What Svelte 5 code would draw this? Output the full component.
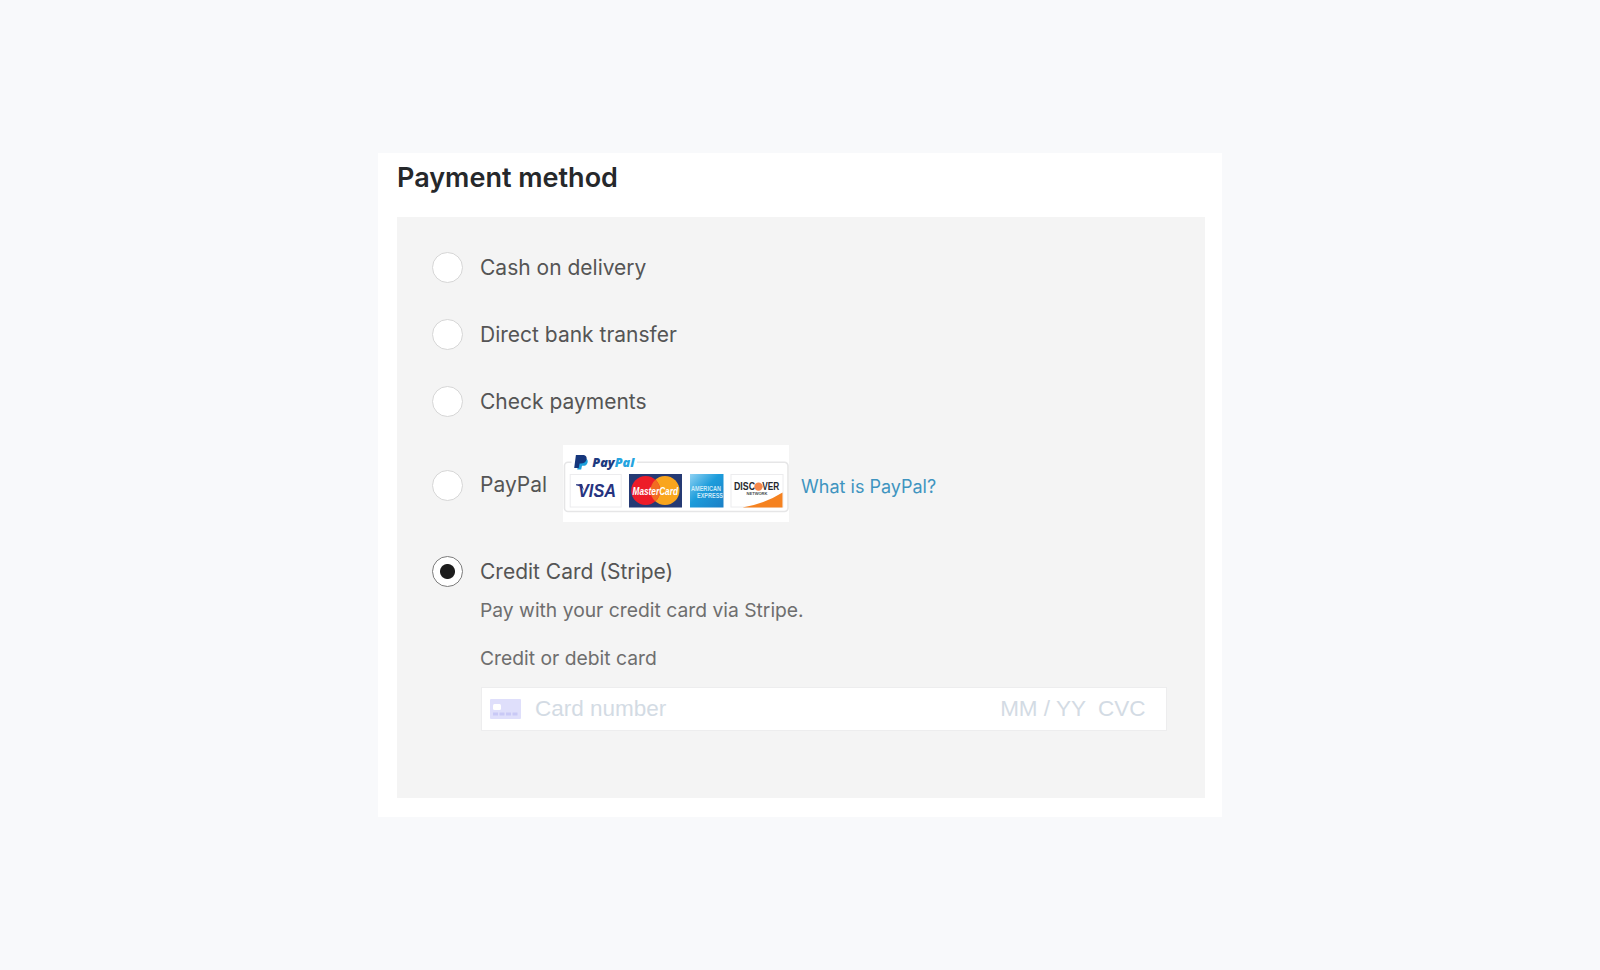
<script>
    let selected = $state('stripe');

    const methods = [
        { id: 'cod', label: 'Cash on delivery' },
        { id: 'bacs', label: 'Direct bank transfer' },
        { id: 'cheque', label: 'Check payments' },
        { id: 'paypal', label: 'PayPal' },
        { id: 'stripe', label: 'Credit Card (Stripe)' }
    ];
</script>

<main>
    <section class="checkout">
        <h1>Payment method</h1>
        <div class="panel">
            {#each methods as method (method.id)}
                <div class="method {method.id}">
                    <input type="radio" id={method.id} name="payment" value={method.id} bind:group={selected} />
                    <label for={method.id}>{method.label}</label>
                    {#if method.id === 'paypal'}
                        <svg class="brands" viewBox="0 0 226 77" width="226" height="77">
                            <rect width="226" height="77" fill="#fff" />
                            <path d="M8.5 17.3H5a3.5 3.5 0 0 0-3.5 3.5V63A3.5 3.5 0 0 0 5 66.5H221.500a3.5 3.5 0 0 0 3.5-3.5V20.8a3.5 3.5 0 0 0-3.5-3.5H74" fill="none" stroke="#e6e6e7" stroke-width="1.6" />

                            <!-- PayPal -->
                            <path d="M16.6 13.4h5.2c2.4 0 3.4 1.7 2.8 4-.6 2.5-2.3 3.4-4.6 3.4h-1l-.8 3.7h-4z" fill="#1da0dc" />
                            <path d="M12.9 10h6.6c3.200 0 4.700 1.800 4 4.600-.6 2.800-2.600 4-5.600 4h-1.300l-.9 4.400h-4.500z" fill="#16367c" />
                            <text x="29.3" y="22.3" textLength="42" lengthAdjust="spacingAndGlyphs" class="logo" font-size="11.5"><tspan fill="#1d3a80">Pay</tspan><tspan fill="#25a4df">Pal</tspan></text>

                            <!-- Visa -->
                            <rect x="7.2" y="29.5" width="51" height="32.5" fill="#fff" stroke="#ececee" />
                            <text x="15" y="52.2" textLength="38" lengthAdjust="spacingAndGlyphs" class="visa" font-size="18" fill="#26337f">VISA</text>
                            <path d="M13 39.200h6l2 6c-1.500-2.600-4-4.200-8-5z" fill="#26337f" />

                            <!-- MasterCard -->
                            <rect x="66" y="29" width="53" height="33.5" fill="#253a74" />
                            <circle cx="102" cy="45.6" r="14.5" fill="#f9a51d" />
                            <circle cx="82.7" cy="45.6" r="14.5" fill="#ed1c28" />
                            <path d="M92.3 34.8a14.5 14.5 0 0 1 0 21.6a14.5 14.5 0 0 1 0-21.6z" fill="#f26c22" />
                            <text x="69.5" y="49.5" textLength="45.500" lengthAdjust="spacingAndGlyphs" class="visa" font-size="10" fill="#fff">MasterCard</text>

                            <!-- American Express -->
                            <defs>
                                <linearGradient id="amex" x1="0" y1="0" x2="1" y2="1">
                                    <stop offset="0" stop-color="#8fd2f3" />
                                    <stop offset=".45" stop-color="#1c9cdb" />
                                    <stop offset="1" stop-color="#1b7fc6" />
                                </linearGradient>
                            </defs>
                            <rect x="127" y="29" width="33.5" height="33.5" fill="url(#amex)" />
                            <text x="128" y="46.3" textLength="30" lengthAdjust="spacingAndGlyphs" class="plain" font-size="7" fill="#c9e9f8">AMERICAN</text>
                            <text x="134" y="52.6" textLength="26" lengthAdjust="spacingAndGlyphs" class="plain" font-size="7" fill="#c9e9f8">EXPRESS</text>

                            <!-- Discover -->
                            <rect x="168" y="29.5" width="52" height="32.5" fill="#fff" stroke="#ececee" />
                            <path d="M179.5 62.5q22-3.5 40-15v15z" fill="#f58220" />
                            <text x="171" y="45.3" textLength="21" lengthAdjust="spacingAndGlyphs" class="plain" font-size="10.5" fill="#25282d">DISC</text>
                            <circle cx="195.5" cy="41.6" r="4.2" fill="#f5874a" />
                            <text x="199.2" y="45.3" textLength="17" lengthAdjust="spacingAndGlyphs" class="plain" font-size="10.5" fill="#25282d">VER</text>
                            <text x="183.5" y="50.3" textLength="21" lengthAdjust="spacingAndGlyphs" class="plain" font-size="4" fill="#4a4c50">NETWORK</text>
                        </svg>
                        <a href="#what-is-paypal">What is PayPal?</a>
                    {/if}
                </div>
            {/each}

            {#if selected === 'stripe'}
                <div class="details">
                    <p class="hint">Pay with your credit card via Stripe.</p>
                    <p class="field-label">Credit or debit card</p>
                    <div class="card-field">
                        <svg viewBox="0 0 31 20" width="31" height="20">
                            <rect width="31" height="20" rx="1" fill="#dfdffb" />
                            <rect x="3" y="5" width="8" height="6" rx="1.5" fill="#fff" />
                            <path d="M3 15h26" stroke="#c9c9f6" stroke-width="3" stroke-dasharray="5 1.5" />
                        </svg>
                        <span class="number">Card number</span>
                        <span class="expiry">MM / YY</span>
                        <span class="cvc">CVC</span>
                    </div>
                </div>
            {/if}
        </div>
    </section>
</main>

<style>
    :global(body) {
        background: #f8f9fb;
    }
    main {
        box-sizing: border-box;
        height: 970px;
        padding-top: 153px;
        font-family: Inter, "Liberation Sans", sans-serif;
    }
    .checkout {
        box-sizing: border-box;
        width: 844px;
        height: 664px;
        margin: 0 auto;
        padding: 0 17.5px 0 19px;
        background: #fff;
    }
    h1 {
        margin: 0;
        height: 64px;
        line-height: 50px;
        font-size: 27px;
        font-weight: 600;
        color: #26282b;
        white-space: nowrap;
    }
    .panel {
        box-sizing: border-box;
        height: 581px;
        padding: 17px 38px 0 35px;
        background: #f4f4f4;
    }
    .method {
        display: flex;
        align-items: center;
        height: 67px;
        font-size: 21px;
        color: #555;
        white-space: nowrap;
    }
    .method.paypal {
        height: 98px;
    }
    .method.stripe {
        height: 76px;
    }
    input {
        appearance: none;
        box-sizing: border-box;
        flex: none;
        width: 31px;
        height: 31px;
        margin: 0 17px 0 0;
        border: 1.5px solid #d6d6d6;
        border-radius: 50%;
        background: #fff;
    }
    input:checked {
        border-color: #7c7c7c;
        background: radial-gradient(circle, #1d1d1d 7px, #fff 8px);
    }
    .paypal input {
        margin-top: 3px;
    }
    .brands {
        flex: none;
        margin-left: 16px;
        margin-top: -1px;
    }
    .logo {
        font-family: "Open Sans", sans-serif;
        font-style: italic;
        font-weight: 800;
    }
    .visa {
        font-family: "Liberation Sans", sans-serif;
        font-style: italic;
        font-weight: 700;
    }
    .plain {
        font-family: "Liberation Sans", sans-serif;
        font-weight: 700;
    }
    a {
        margin-left: 12px;
        margin-top: 5px;
        font-size: 18px;
        color: #3f94c0;
        text-decoration: none;
    }
    .details {
        padding-left: 49px;
        color: #6e6e6e;
        white-space: nowrap;
    }
    p {
        margin: 0 0 0 -1px;
        font-size: 19.3px;
        line-height: 24px;
        height: 48px;
    }
    .hint {
        margin-top: -11.5px;
    }
    .field-label {
        height: 41px;
    }
    .card-field {
        display: flex;
        align-items: center;
        box-sizing: border-box;
        height: 44px;
        padding: 0 20px 0 8px;
        border: 1px solid #ededee;
        background: #fff;
        font-family: "Liberation Sans", Arial, sans-serif;
        font-size: 22.5px;
        color: #d3dbe4;
    }
    .number {
        flex: 1;
        margin-left: 14px;
    }
    .cvc {
        margin-left: 12px;
    }
</style>
